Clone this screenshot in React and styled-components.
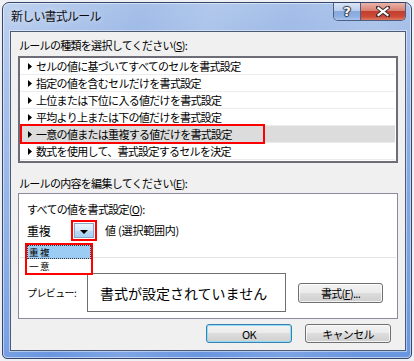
import React from "react";
import styled, { createGlobalStyle } from "styled-components";

const GlobalStyle = createGlobalStyle`
  html, body { margin: 0; padding: 0; background: #eef0f3; }
  body { font-family: "Noto Sans CJK JP", "Noto Sans", sans-serif; color: #000; }
  #root { width: 414px; height: 361px; overflow: hidden; }
`;

const FONT = `"Noto Sans CJK JP", "Noto Sans", sans-serif`;

const Window = styled.div`
  box-sizing: border-box;
  margin: 2px 0 0 2px;
  width: 410px;
  height: 357px;
  border: 1px solid #34476a;
  border-radius: 7px 7px 5px 5px;
  display: flex;
  flex-direction: column;
  background:
    linear-gradient(105deg, rgba(255,255,255,0.28) 0%, rgba(255,255,255,0) 28%, rgba(255,255,255,0.14) 42%, rgba(255,255,255,0) 58%, rgba(255,255,255,0.12) 75%, rgba(255,255,255,0) 90%),
    linear-gradient(180deg, #a6c0e8 0%, #8fb0e6 25%, #7ba3e2 70%, #6a96e0 100%);
  box-shadow: inset 0 0 0 1px rgba(255,255,255,0.5);
  overflow: hidden;
`;

const TitleBar = styled.div`
  height: 28px;
  flex-shrink: 0;
  display: flex;
  align-items: flex-start;
  padding: 0 5px 0 8px;
`;

const Title = styled.div`
  flex: 1;
  line-height: 26px;
  font-size: 12px;
  letter-spacing: -0.8px;
  color: #0c0c10;
  text-shadow: 0 0 6px rgba(255,255,255,0.7);
`;

const CaptionButtons = styled.div`
  display: flex;
  height: 18px;
  border: 1px solid #4d5f80;
  border-top: none;
  border-radius: 0 0 5px 5px;
  overflow: hidden;
  box-sizing: border-box;
`;

const CaptionButton = styled.div`
  width: ${(p) => p.$w}px;
  height: 17px;
  display: flex;
  align-items: center;
  justify-content: center;
  background: ${(p) =>
    p.$close
      ? "linear-gradient(180deg, #eab3a9 0%, #d98272 45%, #c43e2f 50%, #cc4a38 80%, #de7a62 100%)"
      : "linear-gradient(180deg, #dbe6f6 0%, #b9cdee 45%, #8aa9dc 50%, #8fb0e4 80%, #a9c6f0 100%)"};
  border-left: ${(p) => (p.$close ? "1px solid #4d5f80" : "none")};
  color: #fff;
  font-family: "DejaVu Sans", sans-serif;
  font-weight: bold;
  font-size: 13px;
  text-shadow: 0 0 1px #233, 1px 0 1px #334, -1px 0 1px #334, 0 1px 1px #334, 0 -1px 1px #334;
`;

const Client = styled.div`
  box-sizing: border-box;
  height: 320px;
  margin: 0 5px 0 7px;
  flex-shrink: 0;
  border: 1px solid #4c5b74;
  background: #f0f0f0;
  display: flex;
  flex-direction: column;
  padding: 0 7px;
  box-shadow: 0 0 0 1px rgba(255,255,255,0.45);
`;

const Label = styled.div`
  margin-top: ${(p) => p.$mt}px;
  padding-left: ${(p) => p.$pl ?? 1}px;
  font-size: 11px;
  line-height: 14px;
  letter-spacing: -0.7px;
  white-space: nowrap;
`;

const ListBox = styled.div`
  box-sizing: border-box;
  width: 380px;
  height: 107px;
  margin-top: 4px;
  border: 2px solid #6d6d77;
  background: #fff;
  padding: 0 1px 1px 0;
`;

const Row = styled.div`
  position: relative;
  box-sizing: border-box;
  height: 17px;
  border-bottom: 1px solid #ececec;
  display: flex;
  align-items: center;
  gap: 4px;
  padding-left: 8px;
  font-size: 11px;
  line-height: 16px;
  letter-spacing: -0.7px;
  white-space: nowrap;
  background: ${(p) => (p.$selected ? "#dcdcdc" : "transparent")};
`;

const RedMark = styled.div`
  position: absolute;
  left: 0;
  top: -2px;
  width: 245px;
  height: 20px;
  box-sizing: border-box;
  border: 2px solid #f00;
  pointer-events: none;
`;

const RuleBox = styled.div`
  position: relative;
  box-sizing: border-box;
  width: 380px;
  height: 126px;
  margin-top: 3px;
  border: 1px solid #8c8a9c;
  background: #fff;
  display: flex;
  flex-direction: column;
`;

const ComboRow = styled.div`
  height: 22px;
  margin-top: 3px;
  display: flex;
  align-items: center;
  padding-left: 8px;
  font-size: 11px;
  letter-spacing: -0.7px;
  white-space: nowrap;
`;

const ComboText = styled.div`
  width: 44px;
  font-size: 12px;
  letter-spacing: -0.3px;
`;

const RedFrame = styled.div`
  box-sizing: border-box;
  border: 2px solid #f00;
  padding: 1px;
  display: flex;
`;

const DropButton = styled.div`
  box-sizing: border-box;
  width: 20px;
  height: 15px;
  border: 1px solid #8aa6c8;
  background: linear-gradient(180deg, #eaf4fd 0%, #d3e8fa 50%, #b9dbf6 51%, #a8d1f3 100%);
  display: flex;
  align-items: flex-end;
  justify-content: center;
  padding-bottom: 3px;
`;

const ValueLabel = styled.div`
  margin-left: 8px;
  font-size: 11px;
  letter-spacing: -0.2px;
`;

const DropList = styled.div`
  position: absolute;
  left: 6px;
  top: 49px;
  width: 68px;
  box-sizing: border-box;
  border: 2px solid #f00;
  background: #fff;
  display: flex;
  flex-direction: column;
`;

const DropItem = styled.div`
  box-sizing: border-box;
  height: 14px;
  padding-left: 1px;
  font-size: 9.6px;
  line-height: 12px;
  letter-spacing: 1.5px;
  background: ${(p) => (p.$active ? "#9ccbf3" : "#fff")};
  border: 1px dotted ${(p) => (p.$active ? "#3a3a3a" : "transparent")};
`;

const Divider = styled.div`
  height: 1px;
  margin: 16px 1px 0 1px;
  background: #dfe3e3;
`;

const PreviewRow = styled.div`
  height: 39px;
  margin-top: 15px;
  display: flex;
  align-items: center;
  padding-left: 8px;
`;

const PreviewLabel = styled.div`
  width: 60px;
  font-size: 10px;
  letter-spacing: -0.6px;
  white-space: nowrap;
`;

const PreviewBox = styled.div`
  box-sizing: border-box;
  width: 199px;
  height: 39px;
  border: 1px solid #6f6f6f;
  display: flex;
  align-items: center;
  padding-left: 12px;
  font-size: 14px;
  white-space: nowrap;
`;

const DlgButton = styled.button`
  box-sizing: border-box;
  width: ${(p) => p.$w}px;
  height: ${(p) => p.$h}px;
  margin-left: ${(p) => p.$ml ?? 0}px;
  padding: 0;
  border: 1px solid ${(p) => (p.$default ? "#3c7fb1" : "#707070")};
  border-radius: 3px;
  background: linear-gradient(180deg, #f2f2f2 0%, #ebebeb 49%, #dddddd 50%, #cfcfcf 100%);
  box-shadow: inset 0 0 0 1px ${(p) => (p.$default ? "#8fdcf7" : "rgba(255,255,255,0.75)")};
  font-family: ${FONT};
  font-size: 11px;
  letter-spacing: -0.7px;
  color: #000;
  white-space: nowrap;
`;

const Footer = styled.div`
  display: flex;
  justify-content: flex-end;
  gap: 13px;
  margin-top: 5px;
  padding-right: 7px;
`;

const Arrow = () => (
  <svg width="4" height="7" viewBox="0 0 4 7">
    <path d="M0 0 L4 3.5 L0 7 Z" fill="#000" />
  </svg>
);

const DownArrow = () => (
  <svg width="8" height="4" viewBox="0 0 8 4">
    <path d="M0 0 H8 L4 4 Z" fill="#000" />
  </svg>
);

const CloseGlyph = () => (
  <svg width="14" height="11" viewBox="0 0 14 11">
    <path d="M2 1.5 L12 9.5 M12 1.5 L2 9.5" stroke="#3a2a30" strokeWidth="4" strokeLinecap="square" />
    <path d="M2.5 2 L11.5 9 M11.5 2 L2.5 9" stroke="#fff" strokeWidth="2.2" strokeLinecap="square" />
  </svg>
);

const rules = [
  "セルの値に基づいてすべてのセルを書式設定",
  "指定の値を含むセルだけを書式設定",
  "上位または下位に入る値だけを書式設定",
  "平均より上または下の値だけを書式設定",
  "一意の値または重複する値だけを書式設定",
  "数式を使用して、書式設定するセルを決定",
];

export default function App() {
  return (
    <>
      <GlobalStyle />
      <Window>
        <TitleBar>
          <Title>新しい書式ルール</Title>
          <CaptionButtons>
            <CaptionButton $w={26}>?</CaptionButton>
            <CaptionButton $w={44} $close>
              <CloseGlyph />
            </CaptionButton>
          </CaptionButtons>
        </TitleBar>
        <Client>
          <Label $mt={6}>
            ルールの種類を選択してください(<u>S</u>):
          </Label>
          <ListBox>
            {rules.map((r, i) => (
              <Row key={r} $selected={i === 4}>
                <Arrow />
                <span>{r}</span>
                {i === 4 && <RedMark />}
              </Row>
            ))}
          </ListBox>
          <Label $mt={13}>
            ルールの内容を編集してください(<u>E</u>):
          </Label>
          <RuleBox>
            <Label $mt={8} $pl={8}>
              すべての値を書式設定(<u>O</u>):
            </Label>
            <ComboRow>
              <ComboText>重複</ComboText>
              <RedFrame>
                <DropButton>
                  <DownArrow />
                </DropButton>
              </RedFrame>
              <ValueLabel>値 (選択範囲内)</ValueLabel>
            </ComboRow>
            <Divider />
            <PreviewRow>
              <PreviewLabel>プレビュー:</PreviewLabel>
              <PreviewBox>書式が設定されていません</PreviewBox>
              <DlgButton $w={85} $h={20} $ml={12}>
                書式(<u>F</u>)...
              </DlgButton>
            </PreviewRow>
            <DropList>
              <DropItem $active>重複</DropItem>
              <DropItem>一意</DropItem>
            </DropList>
          </RuleBox>
          <Footer>
            <DlgButton $w={86} $h={19} $default>
              OK
            </DlgButton>
            <DlgButton $w={86} $h={19}>
              キャンセル
            </DlgButton>
          </Footer>
        </Client>
      </Window>
    </>
  );
}
